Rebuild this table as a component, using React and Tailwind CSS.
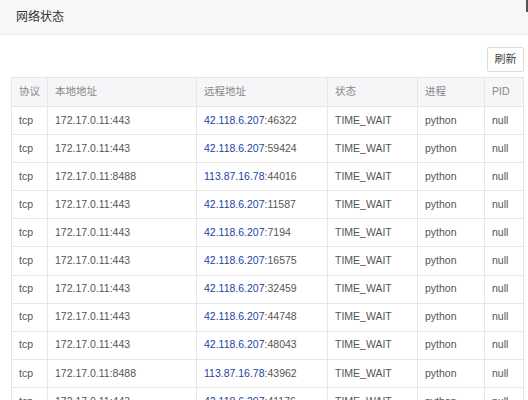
const rows = [
  ["172.17.0.11:443", "42.118.6.207", "46322"],
  ["172.17.0.11:443", "42.118.6.207", "59424"],
  ["172.17.0.11:8488", "113.87.16.78", "44016"],
  ["172.17.0.11:443", "42.118.6.207", "11587"],
  ["172.17.0.11:443", "42.118.6.207", "7194"],
  ["172.17.0.11:443", "42.118.6.207", "16575"],
  ["172.17.0.11:443", "42.118.6.207", "32459"],
  ["172.17.0.11:443", "42.118.6.207", "44748"],
  ["172.17.0.11:443", "42.118.6.207", "48043"],
  ["172.17.0.11:8488", "113.87.16.78", "43962"],
  ["172.17.0.11:443", "42.118.6.207", "41176"],
];

const cols = "grid grid-cols-[36px_149px_131px_90px_67px_40px]";
const cell = "flex items-center pl-[7px] border-r border-[#e6e6e6] last:border-r-0";

export default function App() {
  return (
    <div
      className="relative w-[528px] h-[400px] overflow-hidden bg-white text-[#555]"
      style={{ fontFamily: '"Liberation Sans", Arial, "Noto Sans CJK SC", sans-serif' }}
    >
      <div className="absolute right-0 top-0 w-[2px] h-[12px] bg-[#555]" />

      {/* Title bar */}
      <div className="h-[35px] bg-[#f7f7f7] border-b border-[#ededed] flex items-center pl-[16px] text-[12px] text-[#333]">
        网络状态
      </div>

      {/* Toolbar */}
      <div className="flex justify-end pr-[4px] pt-[12px] pb-[5px]">
        <button className="h-[25px] w-[37px] border border-[#dcdcdc] rounded-[2px] bg-white text-[11px] text-[#444]">
          刷新
        </button>
      </div>

      {/* Table */}
      <div className="ml-[11px] w-[513px] border border-[#e6e6e6] text-[10.5px]">
        <div className={`${cols} h-[28px] bg-[#f6f6f8] text-[#888]`}>
          <div className={cell}>协议</div>
          <div className={cell}>本地地址</div>
          <div className={cell}>远程地址</div>
          <div className={cell}>状态</div>
          <div className={cell}>进程</div>
          <div className={cell}>PID</div>
        </div>
        {rows.map((r, i) => (
          <div key={i} className={`${cols} h-[28.1px] border-t border-[#e6e6e6]`}>
            <div className={cell}>tcp</div>
            <div className={cell}>{r[0]}</div>
            <div className={cell}>
              <span className="text-[#1f3f9f]">{r[1]}</span>
              <span>:{r[2]}</span>
            </div>
            <div className={cell}>TIME_WAIT</div>
            <div className={cell}>python</div>
            <div className={cell}>null</div>
          </div>
        ))}
      </div>
    </div>
  );
}
